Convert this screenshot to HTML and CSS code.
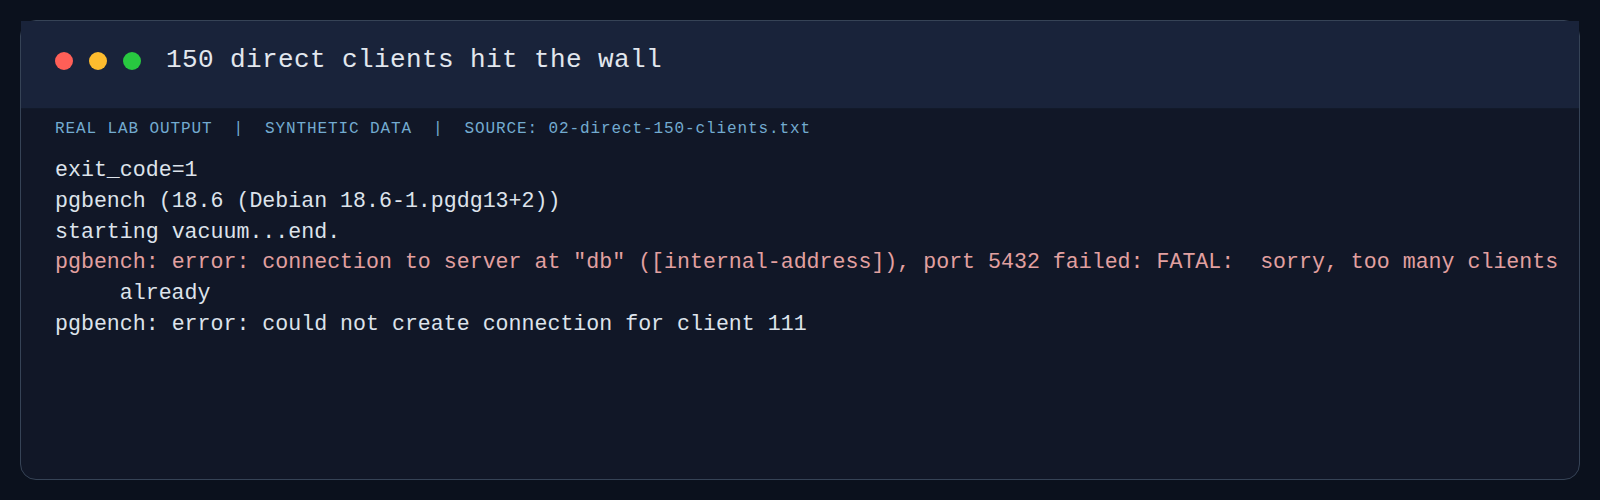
FILE: index.html
```html
<!DOCTYPE html>
<html lang="en">
<head>
<meta charset="utf-8">
<title>150 direct clients hit the wall</title>
<link rel="stylesheet" href="styles.css">
</head>
<body>
<section class="terminal">
  <header class="terminal-header">
    <div class="dots">
      <span class="dot dot-red"></span>
      <span class="dot dot-yellow"></span>
      <span class="dot dot-green"></span>
    </div>
    <h1 class="title">150 direct clients hit the wall</h1>
  </header>
  <div class="terminal-body">
    <div class="meta">REAL LAB OUTPUT  |  SYNTHETIC DATA  |  SOURCE: 02-direct-150-clients.txt</div>
    <div class="output">
      <div class="line">exit_code=1</div>
      <div class="line">pgbench (18.6 (Debian 18.6-1.pgdg13+2))</div>
      <div class="line">starting vacuum...end.</div>
      <div class="line error">pgbench: error: connection to server at "db" ([internal-address]), port 5432 failed: FATAL:  sorry, too many clients</div>
      <div class="line continued">already</div>
      <div class="line">pgbench: error: could not create connection for client 111</div>
    </div>
  </div>
</section>
</body>
</html>
```
FILE: styles.css
```css
* { box-sizing: border-box; }
html, body { margin: 0; padding: 0; }
body {
  background: #0b111d;
  min-height: 100vh;
  padding: 20px;
  display: flex;
  flex-direction: column;
  font-family: "Liberation Mono", "DejaVu Sans Mono", monospace;
}
.terminal {
  flex: 1;
  background: #111727;
  border: 1px solid #364356;
  border-radius: 16px;
  display: flex;
  flex-direction: column;
}
.terminal-header {
  background: #19233a;
  display: flex;
  align-items: center;
  padding: 24px 34px 32px;
  border-bottom: 1px solid #121a2a;
}
.dots {
  display: flex;
  gap: 16px;
  margin-right: 25px;
}
.dot {
  width: 18px;
  height: 18px;
  border-radius: 50%;
  display: block;
}
.dot-red { background: #ff5f57; }
.dot-yellow { background: #febc2e; }
.dot-green { background: #28c840; }
.title {
  margin: 0;
  font-size: 26px;
  font-weight: normal;
  letter-spacing: 0.4px;
  line-height: 31px;
  color: #e2e7ee;
}
.terminal-body {
  padding: 8px 12px 20px 34px;
}
.meta {
  font-size: 16px;
  letter-spacing: 0.9px;
  line-height: 24px;
  color: #73abd0;
  white-space: pre;
}
.output {
  margin-top: 14px;
  font-size: 21.6px;
  line-height: 30.8px;
  color: #dde3eb;
}
.line {
  white-space: pre-wrap;
}
.continued {
  padding-left: 5ch;
}
.error { color: #e2a0a0; }
```
